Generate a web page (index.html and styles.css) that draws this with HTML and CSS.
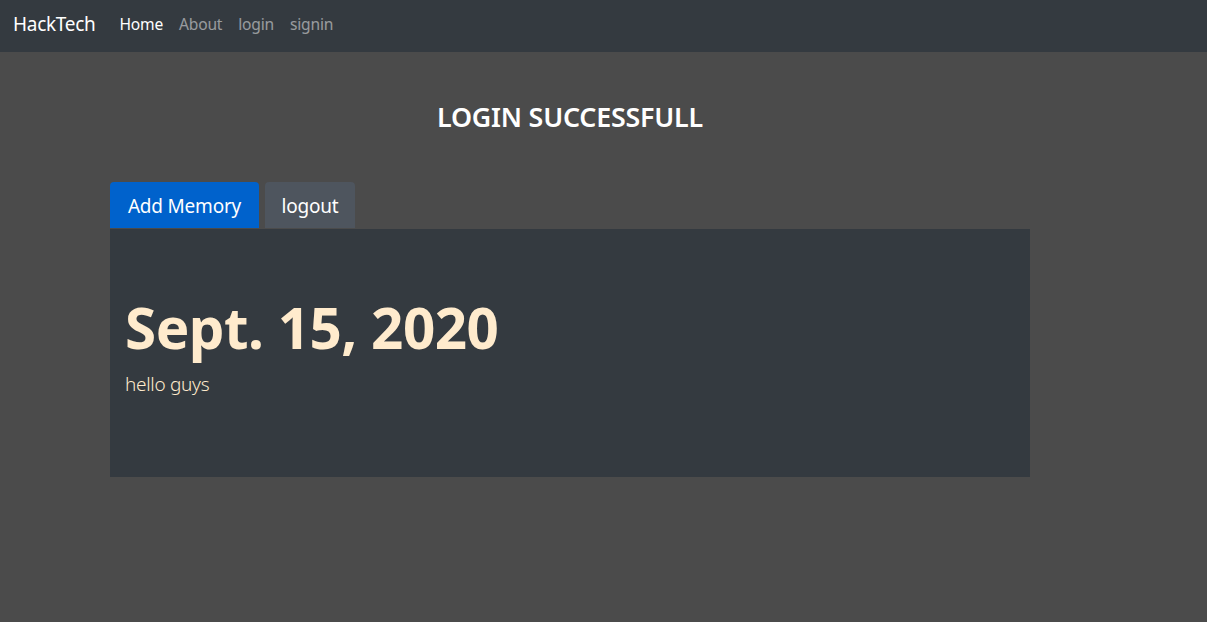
FILE: index.html
```html
<!DOCTYPE html>
<html>
<head>
<meta charset="utf-8">
<link rel="stylesheet" href="styles.css">
</head>
<body>
<nav class="navbar">
  <a class="brand">HackTech</a>
  <ul class="nav">
    <li><a class="nav-link active">Home</a></li>
    <li><a class="nav-link">About</a></li>
    <li><a class="nav-link">login</a></li>
    <li><a class="nav-link">signin</a></li>
  </ul>
</nav>
<main class="main">
  <h3 class="title">LOGIN SUCCESSFULL</h3>
  <div class="actions">
    <button class="btn btn-primary">Add Memory</button>
    <button class="btn btn-secondary">logout</button>
  </div>
  <section class="card">
    <h1 class="date">Sept. 15, 2020</h1>
    <p class="text">hello guys</p>
  </section>
</main>
</body>
</html>
```
FILE: styles.css
```css
html, body {
  margin: 0;
  padding: 0;
}
body {
  background: #4b4b4b;
  font-family: "Noto Sans", "Open Sans", sans-serif;
  height: 622px;
}
.navbar {
  height: 52px;
  background: #343a40;
  display: flex;
  align-items: center;
  padding: 0 13px 4px;
  box-sizing: border-box;
}
.brand {
  color: #fff;
  font-size: 19px;
  margin-right: 17px;
  letter-spacing: -0.3px;
}
.nav {
  list-style: none;
  margin: 0;
  padding: 0;
  display: flex;
}
.nav-link {
  display: block;
  color: rgba(255,255,255,0.5);
  font-size: 15.6px;
  padding: 8px 8px;
  letter-spacing: -0.2px;
}
.nav li:first-child .nav-link {
  padding-left: 7px;
}
.nav-link.active {
  color: #fff;
}
.main {
  width: 920px;
  margin-left: 110px;
  padding-top: 50px;
}
.title {
  margin: 0;
  text-align: center;
  color: #fff;
  font-size: 26.8px;
  font-weight: 600;
  line-height: 30px;
  letter-spacing: -0.2px;
}
.actions {
  display: flex;
  gap: 6px;
  margin-top: 50px;
}
.btn {
  font-family: inherit;
  font-size: 19px;
  color: #fff;
  border: none;
  border-radius: 4px 4px 0 0;
  height: 46px;
  padding: 2px 16px 0;
  letter-spacing: -0.2px;
}
.btn-primary {
  background: #0062cc;
  width: 149px;
}
.btn-secondary {
  background: #4e555e;
  width: 90px;
}
.card {
  background: #343a40;
  height: 248px;
  margin-top: 1px;
  padding: 66px 15px 0;
  box-sizing: border-box;
}
.date {
  margin: 0;
  color: #ffebcd;
  font-size: 56.5px;
  font-weight: 700;
  line-height: 66px;
  letter-spacing: -0.5px;
}
.text {
  margin: 11px 0 0;
  color: #ffebcd;
  font-size: 19px;
  font-weight: 300;
  line-height: 24px;
  letter-spacing: -0.3px;
}
```
